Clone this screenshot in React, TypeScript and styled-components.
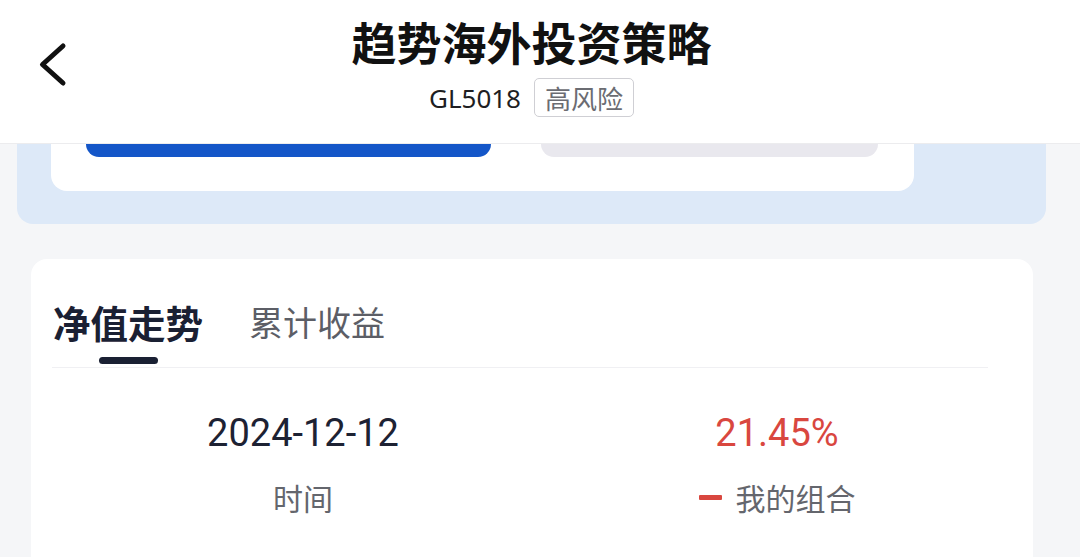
import React from "react";
import styled, { createGlobalStyle } from "styled-components";

const GlobalStyle = createGlobalStyle`
  html, body {
    margin: 0;
    padding: 0;
    background: #f5f6f8;
    font-family: "Noto Sans", "Noto Sans CJK SC", sans-serif;
  }
  * { box-sizing: border-box; }
`;

const Page = styled.div`
  width: 1080px;
  height: 557px;
  overflow: hidden;
  background: #f5f6f8;
`;

const Header = styled.header`
  height: 144px;
  background: #ffffff;
  border-bottom: 1px solid #ececee;
  display: grid;
  grid-template-columns: 1fr auto 1fr;
  padding-right: 17px;
`;

const BackButton = styled.button`
  justify-self: start;
  align-self: start;
  margin: 40px 0 0 38px;
  padding: 0;
  border: none;
  background: none;
  width: 30px;
  height: 50px;
  display: flex;
  cursor: pointer;
`;

const TitleBlock = styled.div`
  display: flex;
  flex-direction: column;
  align-items: center;
  padding-top: 14px;
`;

const Title = styled.h1`
  margin: 0;
  font-family: "Noto Sans CJK SC", sans-serif;
  font-size: 45px;
  line-height: 56px;
  font-weight: 700;
  color: #111111;
`;

const SubRow = styled.div`
  display: flex;
  align-items: center;
  gap: 13px;
  margin-top: 8px;
`;

const Code = styled.span`
  font-family: "Noto Sans", sans-serif;
  font-size: 26px;
  line-height: 38px;
  color: #1e1e22;
`;

const RiskTag = styled.span`
  font-family: "Noto Sans CJK SC", sans-serif;
  font-size: 26px;
  line-height: 37px;
  color: #6b6c72;
  border: 1.5px solid #cfcfd4;
  border-radius: 5px;
  padding: 0 10px;
`;

const Panel = styled.section`
  margin: 0 34px 0 17px;
  background: #dde9f8;
  border-radius: 0 0 16px 16px;
  padding: 0 0 33px 34px;
`;

const ActionCard = styled.div`
  width: 863px;
  background: #ffffff;
  border-radius: 0 0 16px 16px;
  padding: 0 36px 34px 35px;
  display: flex;
  gap: 50px;
`;

const ActionButton = styled.div<{ $primary?: boolean; $w: number }>`
  width: ${(p) => p.$w}px;
  height: 13px;
  border-radius: 0 0 16px 16px;
  background: ${(p) => (p.$primary ? "#1456c8" : "#e9e8ee")};
`;

const ChartCard = styled.section`
  margin: 35px 47px 0 31px;
  background: #ffffff;
  border-radius: 16px;
  padding: 37px 0 60px 0;
`;

const TabBar = styled.div`
  display: flex;
  gap: 46px;
  margin: 0 45px 0 21px;
  padding-left: 1px;
  padding-bottom: 3px;
  border-bottom: 1.5px solid #f0f0f3;
`;

const Tab = styled.div<{ $active?: boolean }>`
  display: flex;
  flex-direction: column;
  align-items: center;
  font-family: "Noto Sans CJK SC", sans-serif;
  font-size: ${(p) => (p.$active ? "37.5px" : "34px")};
  line-height: 52px;
  font-weight: ${(p) => (p.$active ? 700 : 400)};
  color: ${(p) => (p.$active ? "#1a2033" : "#5c5e66")};
`;

const Indicator = styled.span<{ $active?: boolean }>`
  display: block;
  width: 59px;
  height: 7px;
  margin-top: 9px;
  border-radius: 4px;
  background: ${(p) => (p.$active ? "#1a2033" : "transparent")};
`;

const Stats = styled.div`
  display: grid;
  grid-template-columns: 474px 474px;
  padding: 42px 0 0 35px;
`;

const Stat = styled.div`
  display: flex;
  flex-direction: column;
  align-items: center;
  gap: 21px;
`;

const Value = styled.div<{ $red?: boolean }>`
  font-family: "Roboto", sans-serif;
  font-size: 38px;
  line-height: 46px;
  font-weight: 400;
  color: ${(p) => (p.$red ? "#d9473f" : "#1d2233")};
`;

const Label = styled.div`
  display: flex;
  align-items: center;
  gap: 14px;
  font-family: "Noto Sans CJK SC", sans-serif;
  font-size: 30px;
  line-height: 40px;
  color: #64666d;
`;

const LegendDash = styled.span`
  display: block;
  width: 23px;
  height: 5px;
  border-radius: 1px;
  background: #d9473f;
`;

export default function App() {
  return (
    <Page>
      <GlobalStyle />
      <Header>
        <BackButton aria-label="返回">
          <svg width="30" height="50" viewBox="0 0 30 50">
            <polyline
              points="25,6 4.5,24.5 25,43"
              fill="none"
              stroke="#111"
              strokeWidth="5"
              strokeLinecap="round"
              strokeLinejoin="round"
            />
          </svg>
        </BackButton>
        <TitleBlock>
          <Title>趋势海外投资策略</Title>
          <SubRow>
            <Code>GL5018</Code>
            <RiskTag>高风险</RiskTag>
          </SubRow>
        </TitleBlock>
        <div />
      </Header>
      <Panel>
        <ActionCard>
          <ActionButton $primary $w={405} />
          <ActionButton $w={337} />
        </ActionCard>
      </Panel>
      <ChartCard>
        <TabBar>
          <Tab $active>
            净值走势
            <Indicator $active />
          </Tab>
          <Tab>
            累计收益
            <Indicator />
          </Tab>
        </TabBar>
        <Stats>
          <Stat>
            <Value>2024-12-12</Value>
            <Label>时间</Label>
          </Stat>
          <Stat>
            <Value $red>21.45%</Value>
            <Label>
              <LegendDash />
              我的组合
            </Label>
          </Stat>
        </Stats>
      </ChartCard>
    </Page>
  );
}
